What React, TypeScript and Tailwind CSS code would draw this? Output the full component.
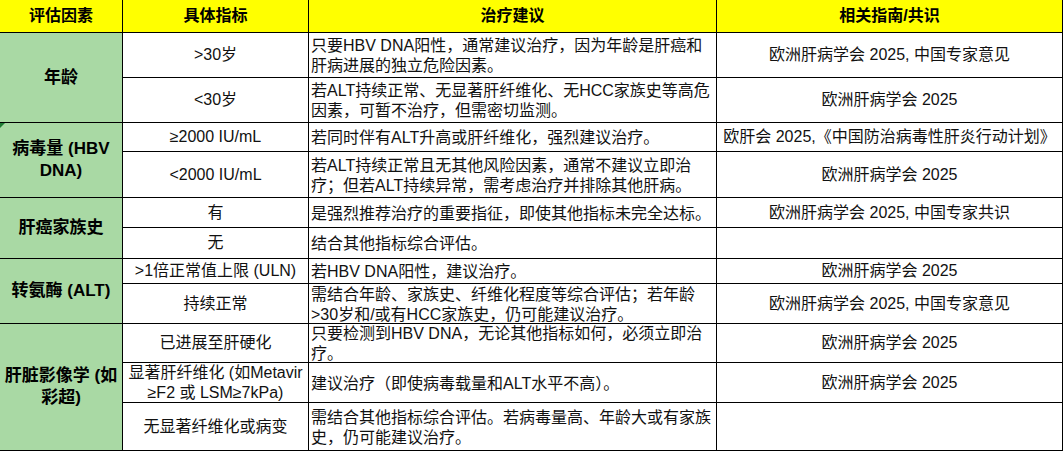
import React from 'react';

type Row = {
  indicator: React.ReactNode;
  advice: React.ReactNode;
  guide: string;
};

type Group = {
  factor: React.ReactNode;
  span: string;
  rows: Row[];
};

const groups: Group[] = [
  {
    factor: '年龄',
    span: 'row-span-2',
    rows: [
      {
        indicator: '>30岁',
        advice: (
          <>
            只要HBV DNA阳性，通常建议治疗，因为年龄是肝癌和
            <br />
            肝病进展的独立危险因素。
          </>
        ),
        guide: '欧洲肝病学会 2025, 中国专家意见'
      },
      {
        indicator: '<30岁',
        advice: (
          <>
            若ALT持续正常、无显著肝纤维化、无HCC家族史等高危
            <br />
            因素，可暂不治疗，但需密切监测。
          </>
        ),
        guide: '欧洲肝病学会 2025'
      }
    ]
  },
  {
    factor: (
      <>
        病毒量 (HBV
        <br />
        DNA)
      </>
    ),
    span: 'row-span-2',
    rows: [
      {
        indicator: '≥2000 IU/mL',
        advice: '若同时伴有ALT升高或肝纤维化，强烈建议治疗。',
        guide: '欧肝会 2025,《中国防治病毒性肝炎行动计划》'
      },
      {
        indicator: '<2000 IU/mL',
        advice: (
          <>
            若ALT持续正常且无其他风险因素，通常不建议立即治
            <br />
            疗；但若ALT持续异常，需考虑治疗并排除其他肝病。
          </>
        ),
        guide: '欧洲肝病学会 2025'
      }
    ]
  },
  {
    factor: '肝癌家族史',
    span: 'row-span-2',
    rows: [
      {
        indicator: '有',
        advice: '是强烈推荐治疗的重要指征，即使其他指标未完全达标。',
        guide: '欧洲肝病学会 2025, 中国专家共识'
      },
      {
        indicator: '无',
        advice: '结合其他指标综合评估。',
        guide: ''
      }
    ]
  },
  {
    factor: '转氨酶 (ALT)',
    span: 'row-span-2',
    rows: [
      {
        indicator: '>1倍正常值上限 (ULN)',
        advice: '若HBV DNA阳性，建议治疗。',
        guide: '欧洲肝病学会 2025'
      },
      {
        indicator: '持续正常',
        advice: (
          <>
            需结合年龄、家族史、纤维化程度等综合评估；若年龄
            <br />
            &gt;30岁和/或有HCC家族史，仍可能建议治疗。
          </>
        ),
        guide: '欧洲肝病学会 2025, 中国专家意见'
      }
    ]
  },
  {
    factor: (
      <>
        肝脏影像学 (如
        <br />
        彩超)
      </>
    ),
    span: 'row-span-3',
    rows: [
      {
        indicator: '已进展至肝硬化',
        advice: (
          <>
            只要检测到HBV DNA，无论其他指标如何，必须立即治
            <br />
            疗。
          </>
        ),
        guide: '欧洲肝病学会 2025'
      },
      {
        indicator: (
          <>
            显著肝纤维化 (如Metavir
            <br />
            ≥F2 或 LSM≥7kPa)
          </>
        ),
        advice: '建议治疗（即使病毒载量和ALT水平不高）。',
        guide: '欧洲肝病学会 2025'
      },
      {
        indicator: '无显著纤维化或病变',
        advice: (
          <>
            需结合其他指标综合评估。若病毒量高、年龄大或有家族
            <br />
            史，仍可能建议治疗。
          </>
        ),
        guide: ''
      }
    ]
  }
];

const headers = ['评估因素', '具体指标', '治疗建议', '相关指南/共识'];

export default function App() {
  return (
    <div className="w-[1063px] h-[451px] bg-white font-['Liberation_Sans','Noto_Sans_CJK_SC',sans-serif] text-[16px] leading-[20px] text-[#111]">
      <div className="grid grid-cols-[122px_185px_407px_345px] grid-rows-[32px_44px_44px_28px_45px_29px_30px_24px_39px_38px_39px_47px] gap-px bg-black pr-px pb-px">
        {/* Header */}
        {headers.map((h) => (
          <div key={h} className="bg-[#ffff00] flex items-center justify-center font-bold text-black">
            {h}
          </div>
        ))}

        {groups.map((g, gi) => (
          <React.Fragment key={gi}>
            <div
              className={`${g.span} relative bg-[#a9d9a4] flex items-center justify-center text-center font-bold text-[17px] leading-[22px] text-black`}
            >
              {gi === 1 && (
                <span className="absolute left-0 top-0 w-0 h-0 border-t-[5px] border-r-[5px] border-t-[#1e7b34] border-r-transparent" />
              )}
              <span>{g.factor}</span>
            </div>
            {g.rows.map((r, ri) => (
              <React.Fragment key={ri}>
                <div className="bg-white flex items-center justify-center text-center whitespace-nowrap">
                  <span>{r.indicator}</span>
                </div>
                <div className="bg-white flex items-center pl-[2px] pt-[2px] whitespace-nowrap">
                  <span>{r.advice}</span>
                </div>
                <div className="bg-white flex items-center justify-center text-center whitespace-nowrap">
                  <span>{r.guide}</span>
                </div>
              </React.Fragment>
            ))}
          </React.Fragment>
        ))}
      </div>
    </div>
  );
}
